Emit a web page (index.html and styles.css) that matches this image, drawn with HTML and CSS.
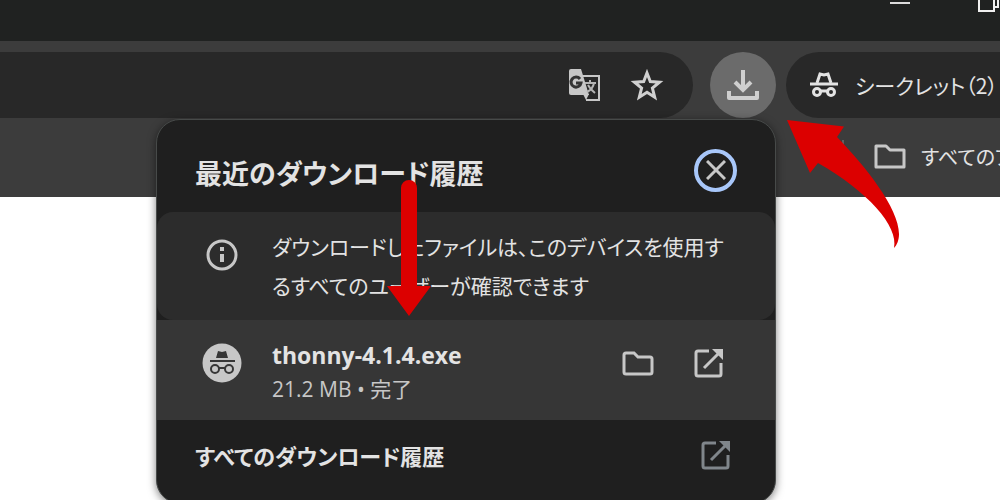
FILE: index.html
```html
<!DOCTYPE html>
<html lang="ja">
<head>
    <meta charset="UTF-8">
    <meta name="viewport" content="width=device-width, initial-scale=1.0">
    <title>最近のダウンロード履歴</title>
    <link rel="stylesheet" href="styles.css">
</head>
<body>

    <header class="titlebar">
        <button class="window-btn" aria-label="最小化">
            <svg width="20" height="12" viewBox="0 0 20 12"><path d="M0 3h20" stroke="#dcdcdc" stroke-width="2"/></svg>
        </button>
        <button class="window-btn" aria-label="元に戻す">
            <svg width="22" height="12" viewBox="0 0 22 12" fill="none" stroke="#f0f0f0" stroke-width="2"><path d="M1-4v15h15V-4z"/><path d="M16 7h4V-6"/></svg>
        </button>
    </header>

    <div class="toolbar">
        <div class="omnibox">
            <input class="address" type="text" aria-label="アドレス">
            <button class="icon-btn" aria-label="このページを翻訳">
                <svg width="34" height="34" viewBox="0 0 34 34">
                    <path d="M14 8h17v24H18" fill="none" stroke="#c7c7c7" stroke-width="2"/>
                    <path d="M3 1h10l8 26H3a2 2 0 0 1-2-2V3a2 2 0 0 1 2-2z" fill="#c7c7c7"/>
                    <path d="M15 26h6l-3 6z" fill="#c7c7c7"/>
                    <path d="M12 11a5 5 0 1 0 1 4h-5" fill="none" stroke="#333" stroke-width="3"/>
                    <path d="M17 15h11M22 12v3M26 15q-1 6-7 9M20 17q2 4 7 8" fill="none" stroke="#b5b5b5" stroke-width="2"/>
                </svg>
            </button>
            <button class="icon-btn" aria-label="ブックマークに追加">
                <svg width="34" height="34" viewBox="0 0 34 34"><path d="M17 5l3.300 8.600 9.200.600-7.100 5.900 2.300 9.100L17 24.200l-7.700 5 2.300-9.100-7.100-5.900 9.200-.600z" fill="none" stroke="#d0d0d0" stroke-width="3"/></svg>
            </button>
        </div>

        <div class="downloads">
            <button class="download-btn" aria-label="ダウンロード">
                <svg width="34" height="34" viewBox="0 0 34 34" fill="none" stroke="#cfcfcf" stroke-width="4"><path d="M17 2v20M9 14l8 8 8-8"/><path d="M3 23v7h28v-7" stroke-linejoin="round"/></svg>
            </button>

            <section class="popup" aria-labelledby="popup-title">
                <div class="popup-header">
                    <h1 class="popup-title" id="popup-title">最近のダウンロード履歴</h1>
                    <button class="close-btn" aria-label="閉じる">
                        <svg width="20" height="20" viewBox="0 0 20 20"><path d="M1 1l18 18M19 1L1 19" stroke="#c7c7c7" stroke-width="3"/></svg>
                    </button>
                </div>

                <div class="notice">
                    <svg class="notice-icon" width="32" height="32" viewBox="0 0 32 32"><circle cx="16" cy="16" r="14" fill="none" stroke="#c7c7c7" stroke-width="3"/><path d="M16 8v4M16 15v8" stroke="#c7c7c7" stroke-width="4"/></svg>
                    <p class="notice-text">ダウンロードしたファイルは、このデバイスを使用するすべてのユーザーが確認できます</p>
                </div>

                <div class="item">
                    <svg class="item-icon" width="40" height="40" viewBox="0 0 40 40">
                        <circle cx="20" cy="20" r="19.500" fill="#c7c7c7"/>
                        <path d="M14 15l2-7 4 1 4-1 2 7z" fill="#363636"/>
                        <path d="M8 18h25" stroke="#363636" stroke-width="2"/>
                        <g fill="none" stroke="#363636" stroke-width="2"><circle cx="13" cy="26" r="4"/><circle cx="27" cy="26" r="4"/><path d="M17 25h6"/></g>
                    </svg>
                    <div class="item-info">
                        <div class="item-name">thonny-4.1.4.exe</div>
                        <div class="item-status">21.2 MB • 完了</div>
                    </div>
                    <button class="icon-btn" aria-label="フォルダを開く">
                        <svg width="32" height="26" viewBox="0 0 32 26"><path d="M4 3h8l4 4h12a2 2 0 0 1 2 2v13a2 2 0 0 1-2 2H4a2 2 0 0 1-2-2V5a2 2 0 0 1 2-2z" fill="none" stroke="#c7c7c7" stroke-width="3"/></svg>
                    </button>
                    <button class="icon-btn" aria-label="ファイルを開く">
                        <svg width="30" height="30" viewBox="0 0 30 30" fill="none" stroke="#c7c7c7" stroke-width="3"><path d="M15 3H4a2 2 0 0 0-2 2v21a2 2 0 0 0 2 2h21a2 2 0 0 0 2-2V15M10 20L26 4"/><path d="M18 1h11v11z" fill="#c7c7c7" stroke="none"/></svg>
                    </button>
                </div>

                <a class="popup-footer" href="#">
                    <span>すべてのダウンロード履歴</span>
                    <svg width="30" height="30" viewBox="0 0 30 30" fill="none" stroke="#80868b" stroke-width="3"><path d="M15 3H4a2 2 0 0 0-2 2v21a2 2 0 0 0 2 2h21a2 2 0 0 0 2-2V15M10 20L26 4"/><path d="M18 1h11v11z" fill="#80868b" stroke="none"/></svg>
                </a>
            </section>

            <!-- red pointer arrows -->
            <svg class="arrow arrow-down" width="44" height="138" viewBox="0 0 44 138"><path d="M14 9a8 8 0 0 1 16 0v98h14L22 137 0 107h14z" fill="#dc0000"/></svg>
            <svg class="arrow arrow-curved" width="113" height="129" viewBox="0 0 113 129"><path d="M0 0l57 6.500L50 17C78 46 112 88 112 114C112 120 110 125 107 128C112 106 80 71 31 43l-8 10z" fill="#dc0000"/></svg>
        </div>

        <button class="incognito">
            <svg width="30" height="30" viewBox="0 0 30 30" fill="none" stroke="#e3e3e3" stroke-width="3"><path d="M1 14h28"/><path d="M8 13l3-9 4 1 4-1 3 9"/><circle cx="8" cy="22" r="3.500"/><circle cx="22" cy="22" r="3.500"/><path d="M11 21h8"/></svg>
            <span>シークレット（2）</span>
        </button>
    </div>

    <nav class="bookmarks">
        <span class="divider"></span>
        <a class="bookmark" href="#">
            <svg width="32" height="26" viewBox="0 0 32 26"><path d="M2 3h10l4 4h14v17H2z" fill="none" stroke="#c7c7c7" stroke-width="3" stroke-linejoin="round"/></svg>
            <span>すべてのブックマーク</span>
        </a>
    </nav>

</body>
</html>
```
FILE: styles.css
```css
* {
    box-sizing: border-box;
}

body {
    margin: 0;
    min-height: 100vh;
    overflow: hidden;
    background-color: #fff;
    color: #e3e3e3;
    font-family: "Noto Sans CJK JP", sans-serif;
    font-feature-settings: "palt";
}

button {
    padding: 0;
    border: 0;
    background: none;
    color: inherit;
    font: inherit;
    font-feature-settings: inherit;
}

a {
    color: inherit;
    text-decoration: none;
}

svg {
    display: block;
    flex: none;
}

/* window frame */
.titlebar {
    display: flex;
    justify-content: flex-end;
    align-items: flex-start;
    gap: 68px;
    height: 41px;
    background-color: #202221;
}

.toolbar {
    display: flex;
    height: 78px;
    padding-top: 11px;
    background-color: #3c3c3c;
}

.omnibox {
    display: flex;
    flex: 1;
    align-items: center;
    gap: 28px;
    height: 66px;
    margin-right: 17px;
    padding-right: 29px;
    border-radius: 0 33px 33px 0;
    background-color: #282828;
}

.address {
    flex: 1;
    min-width: 0;
    border: 0;
    outline: 0;
    background: none;
    color: inherit;
    font-size: 21px;
}

.downloads {
    position: relative;
    margin-right: 10px;
}

.download-btn {
    display: flex;
    align-items: center;
    justify-content: center;
    width: 66px;
    height: 66px;
    border-radius: 50%;
    background-color: #6b6b6b;
}

.incognito {
    display: flex;
    align-items: center;
    gap: 16px;
    width: 214px;
    height: 66px;
    padding-left: 23px;
    border-radius: 33px 0 0 33px;
    background-color: #282828;
    font-size: 21px;
    white-space: nowrap;
    overflow: hidden;
}

.bookmarks {
    display: flex;
    align-items: center;
    justify-content: flex-end;
    height: 78px;
    padding-bottom: 4px;
    background-color: #3c3c3c;
    font-size: 20px;
}

.divider {
    width: 2px;
    height: 32px;
    margin-right: 30px;
    background-color: #5f6163;
}

.bookmark {
    display: flex;
    align-items: center;
    gap: 15px;
    width: 126px;
    overflow: hidden;
    white-space: nowrap;
}

/* download list */
.popup {
    position: absolute;
    top: 67px;
    right: 0;
    width: 620px;
    overflow: hidden;
    border: 1px solid #474a49;
    border-radius: 24px;
    background-color: #1f1f1f;
    box-shadow: 0 2px 8px rgba(0, 0, 0, 0.5);
}

.popup-header {
    display: flex;
    align-items: center;
    justify-content: space-between;
    height: 92px;
    padding: 8px 38px 0;
}

.popup-title {
    margin: 0;
    padding-top: 4px;
    font-size: 27px;
    font-weight: 700;
}

.close-btn {
    display: flex;
    align-items: center;
    justify-content: center;
    width: 43px;
    height: 43px;
    border: 4px solid #a8c7fa;
    border-radius: 50%;
}

.notice {
    display: flex;
    align-items: flex-start;
    gap: 34px;
    padding: 15px 38px 15px 49px;
    border-radius: 16px;
    background-color: #2c2c2c;
}

.notice-icon {
    margin-top: 12px;
}

.notice-text {
    margin: 0;
    font-size: 21px;
    line-height: 39px;
}

.item {
    display: flex;
    align-items: center;
    gap: 40px;
    height: 100px;
    padding: 0 51px 14px 45px;
    background-color: #363636;
}

.item-info {
    flex: 1;
    margin: 16px 0 0 -10px;
}

.item-name {
    font-family: "Open Sans", "Noto Sans CJK JP", sans-serif;
    font-size: 23px;
    font-weight: 700;
    line-height: 36px;
}

.item-status {
    font-family: "Open Sans", "Noto Sans CJK JP", sans-serif;
    color: #c7c7c7;
    font-size: 21px;
    line-height: 32px;
}

.popup-footer {
    display: flex;
    align-items: center;
    justify-content: space-between;
    height: 83px;
    padding: 0 44px 14px 38px;
    font-size: 22px;
    font-weight: 700;
}

.arrow {
    position: absolute;
    pointer-events: none;
}

.arrow-down {
    top: 127px;
    right: 345px;
}

.arrow-curved {
    top: 68px;
    left: 77px;
}
```
